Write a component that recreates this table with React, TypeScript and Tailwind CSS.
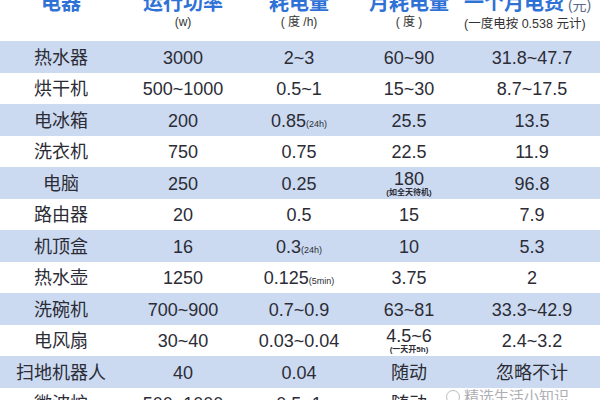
import React from 'react';

type Row = {
  name: string;
  power: string;
  usage: string;
  usageNote?: string;
  month: string;
  monthNote?: string;
  cost: string;
};

const rows: Row[] = [
  { name: '热水器', power: '3000', usage: '2~3', month: '60~90', cost: '31.8~47.7' },
  { name: '烘干机', power: '500~1000', usage: '0.5~1', month: '15~30', cost: '8.7~17.5' },
  { name: '电冰箱', power: '200', usage: '0.85', usageNote: '(24h)', month: '25.5', cost: '13.5' },
  { name: '洗衣机', power: '750', usage: '0.75', month: '22.5', cost: '11.9' },
  { name: '电脑', power: '250', usage: '0.25', month: '180', monthNote: '(如全天待机)', cost: '96.8' },
  { name: '路由器', power: '20', usage: '0.5', month: '15', cost: '7.9' },
  { name: '机顶盒', power: '16', usage: '0.3', usageNote: '(24h)', month: '10', cost: '5.3' },
  { name: '热水壶', power: '1250', usage: '0.125', usageNote: '(5min)', month: '3.75', cost: '2' },
  { name: '洗碗机', power: '700~900', usage: '0.7~0.9', month: '63~81', cost: '33.3~42.9' },
  { name: '电风扇', power: '30~40', usage: '0.03~0.04', month: '4.5~6', monthNote: '(一天开5h)', cost: '2.4~3.2' },
  { name: '扫地机器人', power: '40', usage: '0.04', month: '随动', cost: '忽略不计' },
  { name: '微波炉', power: '500~1000', usage: '0.5~1', month: '随动', cost: '' },
];

const font = { fontFamily: '"Liberation Sans", "Noto Sans CJK SC", sans-serif' };
const cols = 'grid grid-cols-[122px_122px_110px_110px_136px]';

export default function App() {
  return (
    <div className="relative w-[600px] h-[400px] overflow-hidden bg-white" style={font}>
      {/* header, top cut off in the screenshot */}
      <div className={`${cols} h-[41px] overflow-hidden bg-white`}>
        <div className="flex flex-col items-center -mt-[9px]">
          <span className="text-[20px] font-bold text-[#2f72d6] leading-[24px]">电器</span>
        </div>
        <div className="flex flex-col items-center -mt-[9px]">
          <span className="text-[20px] font-bold text-[#2f72d6] leading-[24px]">运行功率</span>
          <span className="text-[12px] text-[#333] leading-[14px]">(w)</span>
        </div>
        <div className="flex flex-col items-center -mt-[9px]">
          <span className="text-[20px] font-bold text-[#2f72d6] leading-[24px]">耗电量</span>
          <span className="text-[12px] text-[#333] leading-[14px]">( 度 /h)</span>
        </div>
        <div className="flex flex-col items-center -mt-[9px]">
          <span className="text-[20px] font-bold text-[#2f72d6] leading-[24px]">月耗电量</span>
          <span className="text-[12px] text-[#333] leading-[14px]">( 度 )</span>
        </div>
        <div className="flex flex-col items-start -mt-[9px] pl-[0px]">
          <span className="leading-[24px] whitespace-nowrap">
            <span className="text-[20px] font-bold text-[#2f72d6]">一个月电费</span>
            <span className="text-[14px] text-[#5a6a8a]"> (元)</span>
          </span>
          <span className="text-[12.5px] text-[#333] leading-[14px] whitespace-nowrap">(一度电按 0.538 元计)</span>
        </div>
      </div>

      {rows.map((r, i) => (
        <div
          key={i}
          className={`${cols} h-[31.5px] pt-[2px] items-center text-[18px] text-[#2c2c36] ${i % 2 === 0 ? 'bg-[#cbdaf0]' : 'bg-white'}`}
        >
          <div className="text-center leading-none">{r.name}</div>
          <div className="text-center leading-none">{r.power}</div>
          <div className="text-center leading-none whitespace-nowrap">
            {r.usage}
            {r.usageNote && <span className="text-[9px]">{r.usageNote}</span>}
          </div>
          <div className="flex flex-col items-center leading-none">
            <span className={r.monthNote ? 'leading-[17px]' : ''}>{r.month}</span>
            {r.monthNote && <span className="text-[8px] font-bold leading-[9px]">{r.monthNote}</span>}
          </div>
          <div className="text-center leading-none">{r.cost}</div>
        </div>
      ))}

      {/* watermark */}
      <div className="absolute left-[446px] top-[386px] flex items-center gap-1 text-[15px] text-[#9a9aa2] opacity-80">
        <span className="w-[14px] h-[14px] rounded-full border border-[#aaa]" />
        <span>精选生活小知识</span>
      </div>
    </div>
  );
}
